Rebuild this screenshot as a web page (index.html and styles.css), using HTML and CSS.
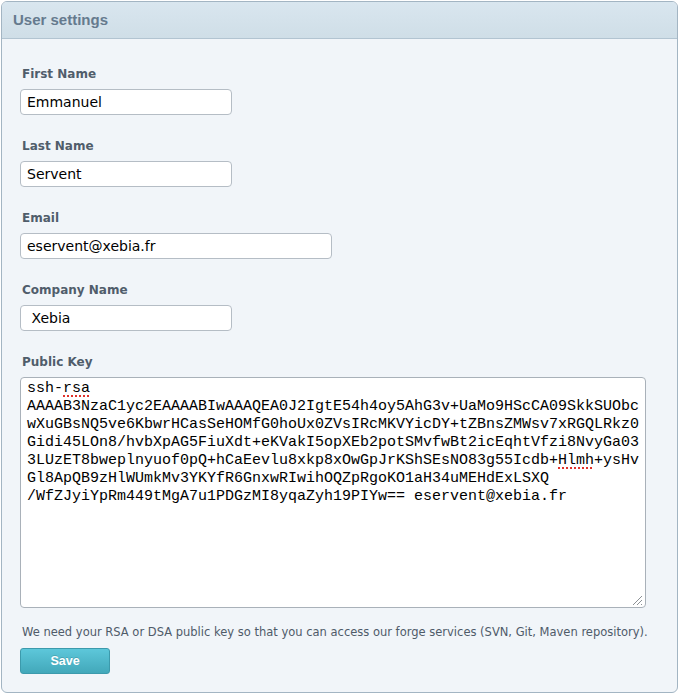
FILE: index.html
```html
<!DOCTYPE html>
<html lang="en">
<head>
<meta charset="utf-8">
<title>User settings</title>
<link rel="stylesheet" href="styles.css">
</head>
<body>
<section class="panel">
  <header class="panel-head">
    <h1 class="panel-title">User settings</h1>
  </header>
  <form class="panel-body">
    <div class="field">
      <label class="field-label" for="first">First Name</label>
      <input class="text-input" id="first" type="text" value="Emmanuel">
    </div>
    <div class="field">
      <label class="field-label" for="last">Last Name</label>
      <input class="text-input" id="last" type="text" value="Servent">
    </div>
    <div class="field">
      <label class="field-label" for="email">Email</label>
      <input class="text-input wide" id="email" type="text" value="eservent@xebia.fr">
    </div>
    <div class="field">
      <label class="field-label" for="company">Company Name</label>
      <input class="text-input" id="company" type="text" value=" Xebia">
    </div>
    <div class="field key-field">
      <label class="field-label">Public Key</label>
      <div class="key-box" role="textbox" aria-multiline="true">
        <span class="key-line">ssh-<span class="misspelled">rsa</span></span>
        <span class="key-line">AAAAB3NzaC1yc2EAAAABIwAAAQEA0J2IgtE54h4oy5AhG3v+UaMo9HScCA09SkkSUObc</span>
        <span class="key-line">wXuGBsNQ5ve6KbwrHCasSeHOMfG0hoUx0ZVsIRcMKVYicDY+tZBnsZMWsv7xRGQLRkz0</span>
        <span class="key-line">Gidi45LOn8/hvbXpAG5FiuXdt+eKVakI5opXEb2potSMvfwBt2icEqhtVfzi8NvyGa03</span>
        <span class="key-line">3LUzET8bweplnyuof0pQ+hCaEevlu8xkp8xOwGpJrKShSEsNO83g55Icdb+<span class="misspelled">Hlmh</span>+ysHv</span>
        <span class="key-line">Gl8ApQB9zHlWUmkMv3YKYfR6GnxwRIwihOQZpRgoKO1aH34uMEHdExLSXQ</span>
        <span class="key-line">/WfZJyiYpRm449tMgA7u1PDGzMI8yqaZyh19PIYw== eservent@xebia.fr</span>
        <svg class="grip" width="12" height="12" viewBox="0 0 12 12" aria-hidden="true"><path d="M11 2 L2 11 M11 6 L6 11 M11 10 L10 11" stroke="#8c9196" stroke-width="1" fill="none"/></svg>
      </div>
    </div>
    <p class="help">We need your RSA or DSA public key so that you can access our forge services (SVN, Git, Maven repository).</p>
    <button class="save-btn" type="button">Save</button>
  </form>
</section>
</body>
</html>
```
FILE: styles.css
```css
html, body {
  margin: 0;
  padding: 0;
  background: #ffffff;
}

body {
  padding: 1px 0 0 1px;
}

.panel {
  box-sizing: border-box;
  width: 677px;
  border: 1px solid #a3b5c3;
  border-radius: 6px;
  background: #f1f5f9;
  overflow: hidden;
}

.panel-head {
  height: 36px;
  border-bottom: 1px solid #b2c4d1;
  background: linear-gradient(to bottom, #d9e6ef, #cfdee7);
}

.panel-title {
  margin: 0;
  padding-left: 11px;
  font-family: "Liberation Sans", Arial, sans-serif;
  font-weight: bold;
  font-size: 15px;
  line-height: 36px;
  color: #657a8e;
}

.panel-body {
  margin: 0;
  padding: 26px 18px 18px 18px;
}

.field {
  margin-bottom: 22px;
}

.field-label {
  display: block;
  margin: 0 0 6px 2px;
  font-family: "DejaVu Sans", Verdana, sans-serif;
  font-weight: bold;
  font-size: 12px;
  line-height: 18px;
  color: #505d6b;
}

.text-input {
  display: block;
  box-sizing: border-box;
  width: 212px;
  height: 26px;
  margin: 0;
  padding: 0 6px;
  border: 1px solid #b5bdc5;
  border-radius: 4px;
  background: #ffffff;
  font-family: "DejaVu Sans", Verdana, sans-serif;
  font-size: 14px;
  color: #000000;
  outline: none;
}

.text-input.wide {
  width: 312px;
}

.key-field {
  margin-bottom: 0;
}

.key-box {
  position: relative;
  box-sizing: border-box;
  width: 626px;
  height: 231px;
  padding: 2px 6px;
  border: 1px solid #a9b1b9;
  border-radius: 4px;
  background: #ffffff;
  font-family: "Liberation Mono", "Courier New", monospace;
  font-size: 15px;
  line-height: 18px;
  color: #000000;
}

.key-line {
  display: block;
  white-space: pre;
}

.misspelled {
  text-decoration: underline dotted #e0322b;
  text-decoration-thickness: 2px;
  text-underline-offset: 3px;
}

.grip {
  position: absolute;
  right: 2px;
  bottom: 1px;
}

.help {
  margin: 15px 0 7px 2px;
  font-family: "DejaVu Sans", Verdana, sans-serif;
  font-size: 11.5px;
  line-height: 18px;
  color: #4f5b69;
}

.save-btn {
  display: block;
  box-sizing: border-box;
  width: 90px;
  height: 26px;
  margin: 0;
  padding: 0;
  border: 1px solid #3c9aac;
  border-radius: 3px;
  background: linear-gradient(to bottom, #5dc7da, #42a8ba);
  font-family: "Liberation Sans", Arial, sans-serif;
  font-weight: bold;
  font-size: 12.5px;
  color: #ffffff;
  text-shadow: 0 -1px 0 rgba(0, 0, 0, 0.15);
}
```
